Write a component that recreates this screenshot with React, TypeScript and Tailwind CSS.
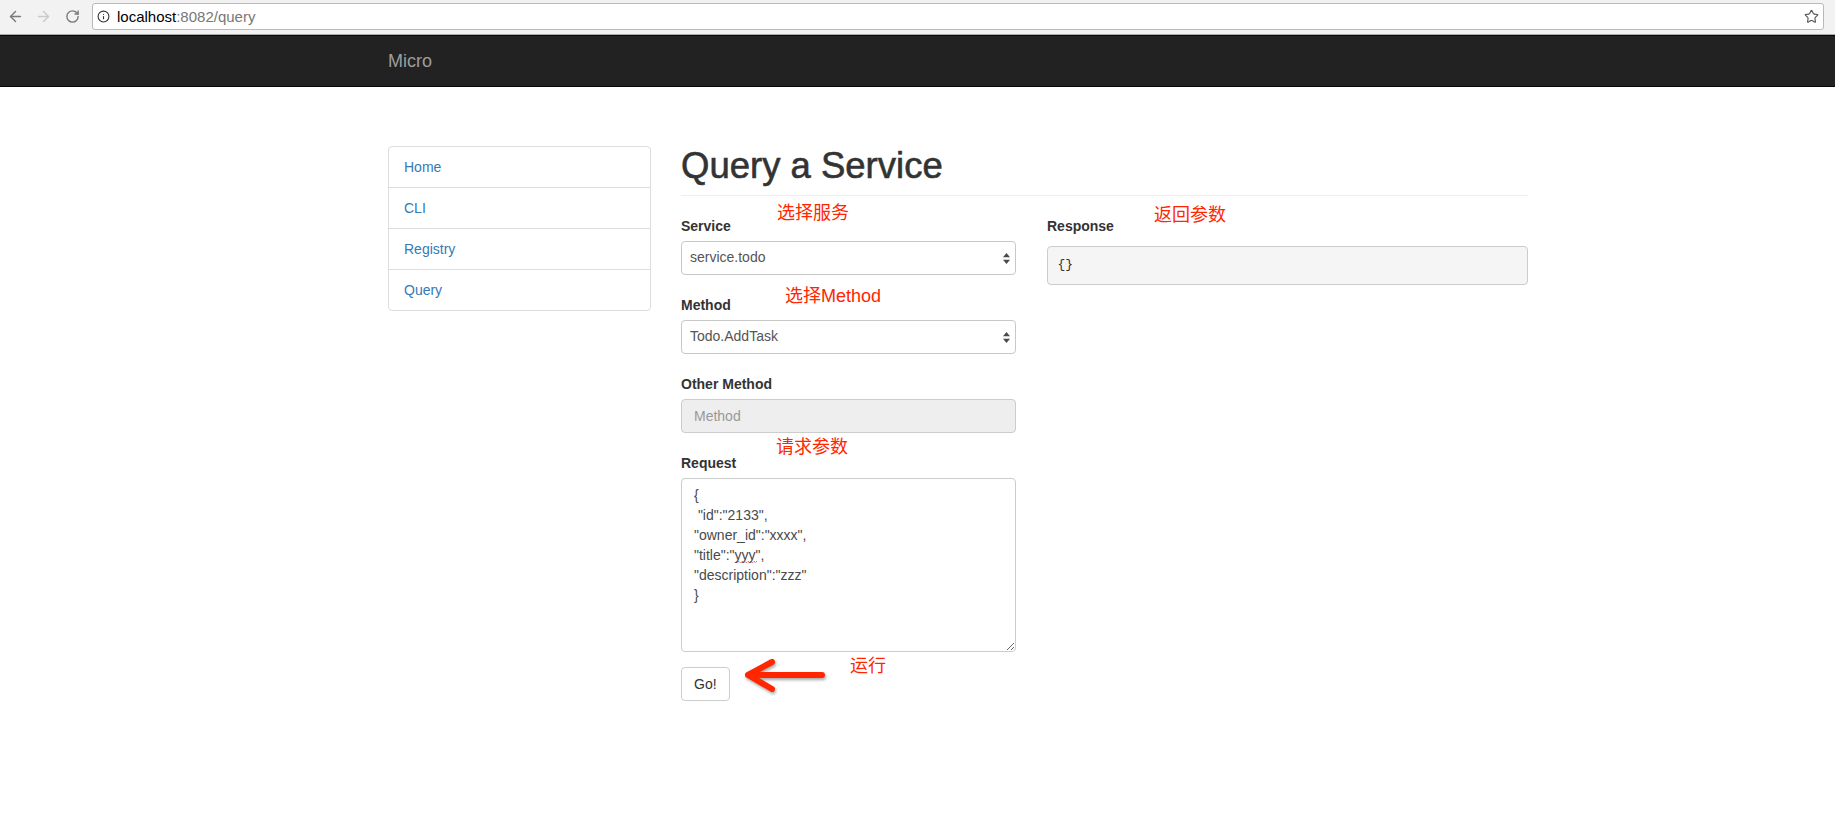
import { ArrowLeft, ArrowRight, RotateCw, Info, Star } from "lucide-react";

const sans = "font-['Liberation_Sans','Noto_Sans_CJK_SC',sans-serif]";

function Annotation({ text, className }: { text: string; className: string }) {
  return (
    <span
      className={`absolute whitespace-nowrap text-[18px] leading-[18px] text-[#ff2600] ${className}`}
    >
      {text}
    </span>
  );
}

function SelectBox({ value }: { value: string }) {
  return (
    <div className="relative">
      <select className="block h-[34px] w-full appearance-none rounded-[4px] border border-[#c8c8c8] bg-white pl-[8px] text-[14px] text-[#555] outline-none">
        <option>{value}</option>
      </select>
      <svg
        className="pointer-events-none absolute right-[6px] top-[12px]"
        width="7"
        height="11"
        viewBox="0 0 7 11"
      >
        <path d="M3.5 0 L7 4.2 H0 Z" fill="#4a4a4a" />
        <path d="M0 6.8 H7 L3.5 11 Z" fill="#4a4a4a" />
      </svg>
    </div>
  );
}

export default function App() {
  const navItems = ["Home", "CLI", "Registry", "Query"];

  return (
    <div className={`min-h-[835px] bg-white text-[#333] ${sans}`}>
      {/* browser chrome */}
      <div className="flex h-[35px] items-start border-b border-[#ababab] bg-[#f2f2f2]">
        <div className="flex h-[33px] items-center">
          <ArrowLeft size={17} strokeWidth={2} className="ml-[7px] text-[#7a7a7a]" />
          <ArrowRight size={17} strokeWidth={2} className="ml-[11px] text-[#c9c9c9]" />
          <RotateCw size={15} strokeWidth={2.2} className="ml-[13px] text-[#7a7a7a]" />
        </div>
        <div className="ml-[12px] mt-[3px] flex h-[27px] w-[1732px] items-center rounded-[3px] border border-[#b9b9b9] bg-white">
          <Info size={13} strokeWidth={2} className="ml-[4px] text-[#333]" />
          <span className="ml-[7px] text-[15px] leading-none">
            <span className="text-black">localhost</span>
            <span className="text-[#777]">:8082/query</span>
          </span>
          <Star size={15} strokeWidth={1.8} className="ml-auto mr-[4px] text-[#555]" />
        </div>
      </div>

      {/* navbar */}
      <div className="h-[52px] border-y border-[#080808] bg-[#222]">
        <div className="ml-[388px] flex h-full items-center text-[18px] text-[#9d9d9d]">Micro</div>
      </div>

      {/* page */}
      <div className="ml-[388px] flex pt-[59px]">
        <div className="w-[263px] self-start rounded-[4px] border border-[#ddd]">
          {navItems.map((item, i) => (
            <div
              key={item}
              className={`px-[15px] py-[10px] text-[14px] leading-[20px] text-[#337ab7] ${
                i > 0 ? "border-t border-[#ddd]" : ""
              }`}
            >
              {item}
            </div>
          ))}
        </div>

        <div className="ml-[30px] w-[847px]">
          <h1 className="border-b border-[#eee] pb-[9px] text-[36.5px] leading-[39.6px] text-[#333] [-webkit-text-stroke:0.6px_#333]">
            Query a Service
          </h1>

          <div className="mt-[20px] flex">
            {/* form */}
            <div className="w-[335px]">
              <div className="relative">
                <Annotation text="选择服务" className="left-[96px] top-[-12px]" />
                <label className="mb-[5px] block text-[14px] font-bold leading-[20px]">Service</label>
                <SelectBox value="service.todo" />
              </div>

              <div className="relative mt-[20px]">
                <Annotation text="选择Method" className="left-[104px] top-[-8px]" />
                <label className="mb-[5px] block text-[14px] font-bold leading-[20px]">Method</label>
                <SelectBox value="Todo.AddTask" />
              </div>

              <div className="mt-[20px]">
                <label className="mb-[5px] block text-[14px] font-bold leading-[20px]">Other Method</label>
                <input
                  disabled
                  placeholder="Method"
                  className="block h-[34px] w-full rounded-[4px] border border-[#ccc] bg-[#eee] px-[12px] text-[14px] placeholder:text-[#999]"
                />
              </div>

              <div className="relative mt-[20px]">
                <Annotation text="请求参数" className="left-[95px] top-[-15px]" />
                <label className="mb-[5px] block text-[14px] font-bold leading-[20px]">Request</label>
                <div className="relative">
                  <textarea
                    spellCheck={false}
                    defaultValue={`{\n "id":"2133",\n"owner_id":"xxxx",\n"title":"yyy",\n"description":"zzz"\n}`}
                    className="block h-[174px] w-full rounded-[4px] border border-[#ccc] bg-white px-[12px] py-[6px] text-[14px] leading-[20px] text-[#4a4a4a] outline-none"
                  />
                  <svg
                    className="pointer-events-none absolute left-[55px] top-[82px]"
                    width="21"
                    height="4"
                    viewBox="0 0 21 4"
                  >
                    <path
                      d="M0 1 L1.5 3 L3 1 L4.5 3 L6 1 L7.5 3 L9 1 L10.5 3 L12 1 L13.5 3 L15 1 L16.5 3 L18 1 L19.5 3 L21 1"
                      fill="none"
                      stroke="#e0443a"
                      strokeWidth="1"
                      strokeDasharray="1 1"
                    />
                  </svg>
                </div>
              </div>

              <div className="relative mt-[15px]">
                <button className="h-[34px] rounded-[4px] border border-[#ccc] bg-white px-[12px] text-[14px] leading-[20px] text-[#333]">
                  Go!
                </button>
                <svg
                  className="pointer-events-none absolute left-[64px] top-[-9px] drop-shadow-[1px_2px_1.5px_rgba(0,0,0,0.35)]"
                  width="82"
                  height="36"
                  viewBox="0 0 82 36"
                >
                  <path
                    d="M77 17 L4 17 M27 4 L3 17 L27 31"
                    fill="none"
                    stroke="#ff2600"
                    strokeWidth="6"
                    strokeLinecap="round"
                    strokeLinejoin="round"
                  />
                </svg>
                <Annotation text="运行" className="left-[169px] top-[-10px]" />
              </div>
            </div>

            {/* response */}
            <div className="relative ml-[31px] w-[481px]">
              <Annotation text="返回参数" className="left-[107px] top-[-10px]" />
              <label className="mb-[10px] block text-[14px] font-bold leading-[20px]">Response</label>
              <pre className="rounded-[4px] border border-[#ccc] bg-[#f5f5f5] p-[9.5px] font-['Liberation_Mono',monospace] text-[13px] leading-[18.6px] text-[#333]">
                {"{}"}
              </pre>
            </div>
          </div>
        </div>
      </div>
    </div>
  );
}
